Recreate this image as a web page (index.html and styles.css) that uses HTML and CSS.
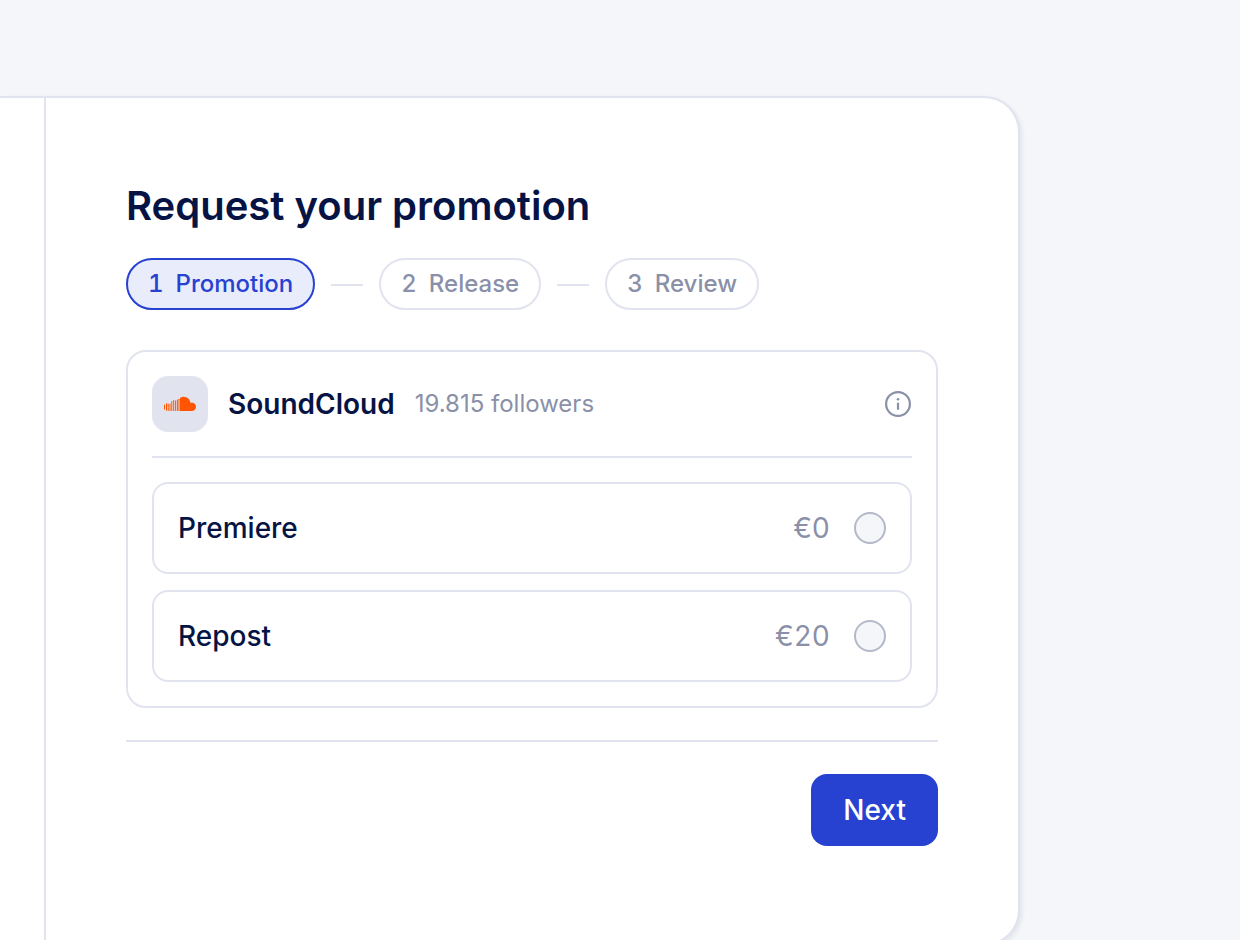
FILE: index.html
```html
<!DOCTYPE html>
<html lang="en">
<head>
<meta charset="utf-8">
<meta name="viewport" content="width=device-width, initial-scale=1">
<title>Request your promotion</title>
<link rel="stylesheet" href="styles.css">
</head>
<body>
<main class="panel">
  <div class="panel-side"></div>
  <form class="request">
    <h1 class="title">Request your promotion</h1>
    <ol class="steps">
      <li class="step step-active" aria-current="step"><span>1</span><span>Promotion</span></li>
      <li class="step-line" role="presentation"></li>
      <li class="step"><span>2</span><span>Release</span></li>
      <li class="step-line" role="presentation"></li>
      <li class="step"><span>3</span><span>Review</span></li>
    </ol>
    <section class="channel">
      <header class="channel-head">
        <span class="channel-logo">
          <svg width="32" height="16" viewBox="0 0 32 16" aria-hidden="true">
            <g fill="#ff5500">
              <path d="M16 2.1C17 1.300 18.200 .7 19.500 .7C23.300 .7 26.200 3.500 26.600 7.100C29.500 6 32 8.100 32 10.800C32 13.200 30.200 15 27.800 15H16.500Q16 15 16 14.500Z"/>
              <rect x="0" y="8.500" width="1" height="5" rx=".5"/>
              <rect x="2" y="7" width="1" height="7.800" rx=".5"/>
              <rect x="3.700" y="7.400" width="1" height="7.600" rx=".5"/>
              <rect x="5.500" y="7.400" width="1" height="7.600" rx=".5"/>
              <rect x="7.300" y="5" width="1" height="10" rx=".5"/>
              <rect x="9.200" y="4" width="1" height="11" rx=".5"/>
              <rect x="11.100" y="4.200" width="1" height="10.800" rx=".5"/>
              <rect x="12.900" y="3.400" width="1" height="11.600" rx=".5"/>
              <rect x="14.500" y="2.800" width="1" height="12.200" rx=".5"/>
            </g>
          </svg>
        </span>
        <h2 class="channel-name">SoundCloud</h2>
        <span class="channel-followers">19.815 followers</span>
        <button class="info" type="button" aria-label="Channel information">
          <svg width="28" height="28" viewBox="0 0 28 28" fill="none" aria-hidden="true">
            <circle cx="14" cy="14" r="11.900" stroke="#8a90a8" stroke-width="2.200"/>
            <circle cx="14" cy="9.300" r="1.300" fill="#8a90a8"/>
            <path d="M14 13.600V19" stroke="#8a90a8" stroke-width="2.200" stroke-linecap="round"/>
          </svg>
        </button>
      </header>
      <div class="options">
        <label class="option" for="premiere">
          <span class="option-name">Premiere</span>
          <span class="option-price">€0</span>
          <input class="option-radio" type="radio" name="promotion" id="premiere" value="premiere">
        </label>
        <label class="option" for="repost">
          <span class="option-name">Repost</span>
          <span class="option-price">€20</span>
          <input class="option-radio" type="radio" name="promotion" id="repost" value="repost">
        </label>
      </div>
    </section>
    <footer class="actions">
      <button class="next" type="button">Next</button>
    </footer>
  </form>
</main>
</body>
</html>
```
FILE: styles.css
```css
* {
  box-sizing: border-box;
}

html {
  overflow: hidden;
}

body {
  margin: 0;
  padding: 96px 220px 96px 0;
  background: #f4f6fa;
  color: #061445;
  font-family: Inter, "Liberation Sans", sans-serif;
}

.panel {
  display: grid;
  grid-template-columns: 46px 1fr;
  background: #fff;
  border: 2px solid #e1e4ef;
  border-left: 0;
  border-radius: 0 36px 36px 0;
  box-shadow: 2px 2px 4px rgba(6, 20, 69, 0.08);
}

.panel-side {
  border-right: 2px solid #e1e4ef;
}

.request {
  padding: 80px 80px 98px;
}

.title {
  margin: 0 0 24px;
  font-size: 40px;
  line-height: 56px;
  font-weight: 600;
}

.steps {
  display: flex;
  align-items: center;
  gap: 16px;
  margin: 0 0 40px;
  padding: 0;
  list-style: none;
}

.step {
  display: flex;
  gap: 12px;
  padding: 8px 20px;
  border: 2px solid #e1e4ef;
  border-radius: 26px;
  color: #8a90a8;
  font-size: 24px;
  line-height: 32px;
  font-weight: 500;
  font-variant-numeric: tabular-nums;
}

.step-active {
  border-color: #2741d0;
  background: #e8ecfb;
  color: #2741d0;
}

.step-line {
  width: 32px;
  height: 2px;
  margin-top: 2px;
  background: #e1e4ef;
}

.channel {
  padding: 24px;
  border: 2px solid #e1e4ef;
  border-radius: 20px;
}

.channel-head {
  display: flex;
  align-items: center;
  gap: 20px;
  padding-bottom: 24px;
  border-bottom: 2px solid #e1e4ef;
}

.channel-logo {
  display: flex;
  align-items: center;
  justify-content: center;
  width: 56px;
  height: 56px;
  border-radius: 16px;
  background: #e1e4ef;
}

.channel-name {
  margin: 0;
  font-size: 28px;
  line-height: 40px;
  font-weight: 600;
}

.channel-followers {
  color: #8a90a8;
  font-size: 24px;
  line-height: 32px;
}

.info {
  display: flex;
  margin-left: auto;
  padding: 0;
  border: 0;
  background: none;
}

.options {
  display: grid;
  gap: 16px;
  padding-top: 24px;
}

.option {
  display: flex;
  align-items: center;
  gap: 24px;
  padding: 24px;
  border: 2px solid #e1e4ef;
  border-radius: 16px;
  font-size: 28px;
  line-height: 40px;
  font-weight: 500;
}

.option-name {
  flex: 1;
}

.option-price {
  color: #8a90a8;
  font-weight: 400;
  font-variant-numeric: tabular-nums;
}

.option-radio {
  appearance: none;
  width: 32px;
  height: 32px;
  margin: 0;
  border: 2px solid #b5b8c9;
  border-radius: 50%;
  background: #f4f6fa;
}

.option-radio:checked {
  border: 10px solid #2741d0;
}

.actions {
  display: flex;
  justify-content: flex-end;
  margin-top: 32px;
  padding-top: 32px;
  border-top: 2px solid #e1e4ef;
}

.next {
  padding: 16px 32px;
  border: 0;
  border-radius: 16px;
  background: #2741d0;
  color: #fff;
  font: 500 28px/40px Inter, "Liberation Sans", sans-serif;
}
```
